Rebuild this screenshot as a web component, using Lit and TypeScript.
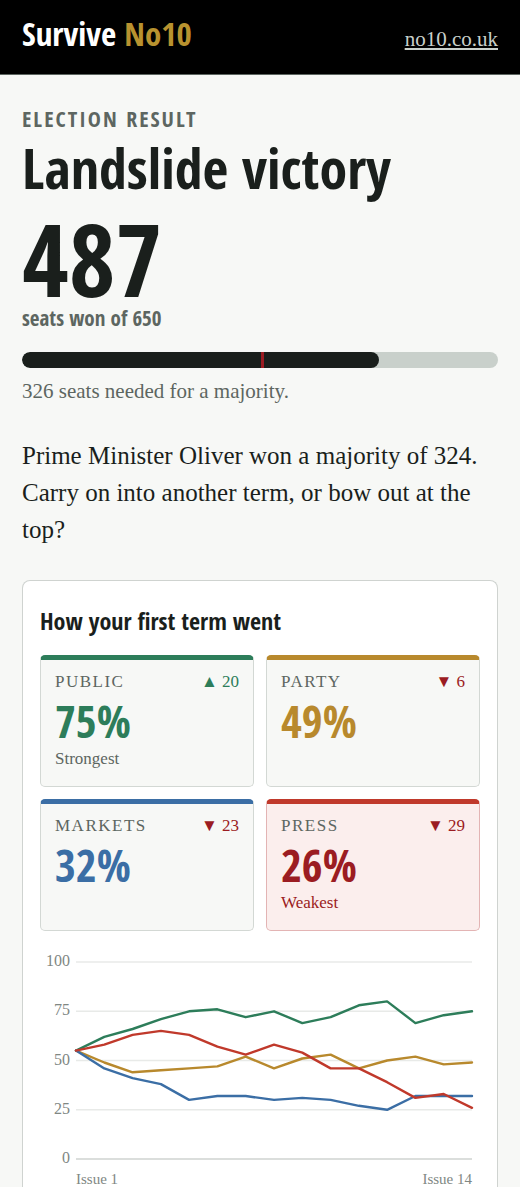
import { LitElement, html, svg, css } from "lit";
import { customElement, property } from "lit/decorators.js";
import { classMap } from "lit/directives/class-map.js";

type Tone = "public" | "party" | "markets" | "press";

interface Rating {
  tone: Tone;
  name: string;
  value: number;
  change: number;
  note?: string;
}

interface Series {
  tone: Tone;
  values: number[];
}

const RATINGS: Rating[] = [
  { tone: "public", name: "Public", value: 75, change: 20, note: "Strongest" },
  { tone: "party", name: "Party", value: 49, change: -6 },
  { tone: "markets", name: "Markets", value: 32, change: -23 },
  { tone: "press", name: "Press", value: 26, change: -29, note: "Weakest" },
];

const SERIES: Series[] = [
  { tone: "public", values: [55, 62, 66, 71, 75, 76, 72, 75, 69, 72, 78, 80, 69, 73, 75] },
  { tone: "party", values: [55, 49, 44, 45, 46, 47, 52, 46, 51, 53, 46, 50, 52, 48, 49] },
  { tone: "markets", values: [55, 46, 41, 38, 30, 32, 32, 30, 31, 30, 27, 25, 32, 32, 32] },
  { tone: "press", values: [55, 58, 63, 65, 63, 57, 53, 58, 54, 46, 46, 39, 31, 33, 26] },
];

@customElement("seat-bar")
export class SeatBar extends LitElement {
  @property({ type: Number }) seats = 0;
  @property({ type: Number }) total = 650;
  @property({ type: Number }) needed = 326;

  static styles = css`
    :host {
      display: block;
    }
    .track {
      position: relative;
      height: 16px;
      border-radius: 8px;
      overflow: hidden;
      background: #c9d0cb;
    }
    .fill {
      height: 100%;
      border-radius: 8px;
      background: #1a1f1c;
    }
    .mark {
      position: absolute;
      top: 0;
      bottom: 0;
      width: 3px;
      background: #9b1c22;
    }
  `;

  render() {
    return html`
      <div
        class="track"
        role="meter"
        aria-label="Seats won"
        aria-valuemin="0"
        aria-valuemax=${this.total}
        aria-valuenow=${this.seats}
      >
        <div class="fill" style="width:${(this.seats / this.total) * 100}%"></div>
        <div class="mark" style="left:${(this.needed / this.total) * 100}%"></div>
      </div>
    `;
  }
}

@customElement("rating-tile")
export class RatingTile extends LitElement {
  @property({ attribute: false }) rating!: Rating;

  static styles = css`
    :host {
      display: grid;
      color: #5d6661;
      font-family: "Liberation Serif", serif;
    }
    .tile {
      box-sizing: border-box;
      min-height: 132px;
      padding: 12px 14px 14px;
      border: 1px solid #d3d8d4;
      border-top: 5px solid currentColor;
      border-radius: 5px;
      background: #f7f8f6;
    }
    .public {
      border-top-color: #2d7d5a;
    }
    .party {
      border-top-color: #b8892d;
    }
    .markets {
      border-top-color: #3b6ea5;
    }
    .press {
      border-color: #e3b4b4;
      border-top-color: #c0392b;
      background: #fbeeed;
    }
    .head {
      display: flex;
      justify-content: space-between;
      font-size: 17px;
      line-height: 20px;
    }
    .name {
      letter-spacing: 1.5px;
      text-transform: uppercase;
    }
    .up {
      color: #2d7d5a;
    }
    .down {
      color: #9b1c22;
    }
    .value {
      font-family: "Open Sans Condensed", "Liberation Sans Narrow", "Liberation Sans", sans-serif;
      font-size: 45px;
      font-weight: 700;
      line-height: 58px;
    }
    .public .value {
      color: #2d7d5a;
    }
    .party .value {
      color: #b8892d;
    }
    .markets .value {
      color: #3b6ea5;
    }
    .press .value,
    .press .note {
      color: #9b1c22;
    }
    .note {
      font-size: 17px;
      line-height: 18px;
    }
  `;

  render() {
    const r = this.rating;
    const up = r.change > 0;
    return html`
      <div class=${classMap({ tile: true, [r.tone]: true })}>
        <div class="head">
          <span class="name">${r.name}</span>
          <span class=${up ? "up" : "down"}>${up ? "▲" : "▼"} ${Math.abs(r.change)}</span>
        </div>
        <div class="value">${r.value}%</div>
        ${r.note ? html`<div class="note">${r.note}</div>` : null}
      </div>
    `;
  }
}

const LEFT = 36;
const RIGHT = 432;
const TOP = 14;
const BOTTOM = 211;

@customElement("term-chart")
export class TermChart extends LitElement {
  @property({ attribute: false }) series: Series[] = [];

  static styles = css`
    :host {
      display: block;
    }
    svg {
      display: block;
      width: 100%;
      height: auto;
    }
    text {
      fill: #808783;
      font-family: "Liberation Serif", serif;
      font-size: 16px;
    }
    .issue {
      font-size: 15px;
    }
    .grid {
      stroke: #e8eae8;
      stroke-width: 1.3;
    }
    .base {
      stroke: #cfd3d0;
      stroke-width: 1.6;
    }
    .line {
      fill: none;
      stroke-width: 2.4;
      stroke-linejoin: round;
      stroke-linecap: round;
    }
    .public {
      stroke: #2d7d5a;
    }
    .party {
      stroke: #b8892d;
    }
    .markets {
      stroke: #3b6ea5;
    }
    .press {
      stroke: #c0392b;
    }
  `;

  private y(value: number) {
    return BOTTOM - (value / 100) * (BOTTOM - TOP);
  }

  private points(values: number[]) {
    const step = (RIGHT - LEFT) / (values.length - 1);
    return values.map((v, i) => `${(LEFT + i * step).toFixed(1)},${this.y(v).toFixed(1)}`).join(" ");
  }

  render() {
    return html`
      <svg viewBox="0 0 440 239" role="img" aria-label="Approval by issue">
        ${[100, 75, 50, 25, 0].map(
          (v) => svg`
            <line class=${v ? "grid" : "base"} x1=${LEFT} x2=${RIGHT} y1=${this.y(v)} y2=${this.y(v)}></line>
            <text x="30" y=${this.y(v) + 4} text-anchor="end">${v}</text>
          `
        )}
        ${this.series.map(
          (s) => svg`<polyline class="line ${s.tone}" points=${this.points(s.values)}></polyline>`
        )}
        <text class="issue" x=${LEFT} y="236">Issue 1</text>
        <text class="issue" x=${RIGHT} y="236" text-anchor="end">Issue 14</text>
      </svg>
    `;
  }
}

@customElement("app-root")
export class AppRoot extends LitElement {
  static styles = css`
    :host {
      display: block;
      min-height: 100vh;
      background: #f7f8f6;
      color: #1a1f1c;
      font-family: "Liberation Serif", serif;
    }
    h1,
    h2,
    p {
      margin: 0;
    }
    .brand,
    .eyebrow,
    .title,
    .count,
    .unit,
    .heading {
      font-family: "Open Sans Condensed", "Liberation Sans Narrow", "Liberation Sans", sans-serif;
    }
    .bar {
      display: flex;
      justify-content: space-between;
      align-items: baseline;
      padding: 12px 22px 18px;
      border-bottom: 1px solid #5d6661;
      background: #000;
    }
    .brand {
      color: #fff;
      font-size: 33px;
      font-weight: 700;
      line-height: 44px;
    }
    .ten {
      color: #b8922f;
    }
    .site {
      color: #c9d0cb;
      font-size: 21px;
    }
    .page {
      padding: 28px 22px 0;
    }
    .eyebrow {
      color: #5d6661;
      font-size: 22px;
      line-height: 30px;
      letter-spacing: 2px;
      text-transform: uppercase;
    }
    .title {
      font-size: 56px;
      font-weight: 700;
      line-height: 68px;
    }
    .count {
      margin-top: 12px;
      font-size: 101px;
      font-weight: 700;
      line-height: 90px;
    }
    .unit {
      color: #5d6661;
      font-size: 21px;
      font-weight: 400;
      line-height: 30px;
    }
    .seats {
      margin-top: 19px;
    }
    .needed {
      margin-top: 8px;
      color: #5d6661;
      font-size: 21px;
      line-height: 30px;
    }
    .summary {
      margin-top: 31px;
      font-size: 25px;
      line-height: 37px;
    }
    .card {
      margin-top: 32px;
      padding: 22px 17px 0;
      border: 1px solid #cfd3d0;
      border-bottom: 0;
      border-radius: 8px 8px 0 0;
      background: #fff;
    }
    .heading {
      font-size: 24px;
      font-weight: 700;
      line-height: 36px;
    }
    .tiles {
      display: grid;
      grid-template-columns: 1fr 1fr;
      gap: 12px;
      margin-top: 16px;
    }
    .chart {
      margin-top: 17px;
    }
  `;

  render() {
    return html`
      <header class="bar">
        <span class="brand">Survive <span class="ten">No10</span></span>
        <a class="site" href="https://no10.co.uk">no10.co.uk</a>
      </header>
      <main class="page">
        <p class="eyebrow">Election result</p>
        <h1 class="title">Landslide victory</h1>
        <p class="count">487</p>
        <p class="unit">seats won of 650</p>
        <seat-bar class="seats" seats="487" total="650" needed="326"></seat-bar>
        <p class="needed">326 seats needed for a majority.</p>
        <p class="summary">
          Prime Minister Oliver won a majority of 324. Carry on into another term, or bow out at the top?
        </p>
        <section class="card">
          <h2 class="heading">How your first term went</h2>
          <div class="tiles">
            ${RATINGS.map((r) => html`<rating-tile .rating=${r}></rating-tile>`)}
          </div>
          <term-chart class="chart" .series=${SERIES}></term-chart>
        </section>
      </main>
    `;
  }
}
